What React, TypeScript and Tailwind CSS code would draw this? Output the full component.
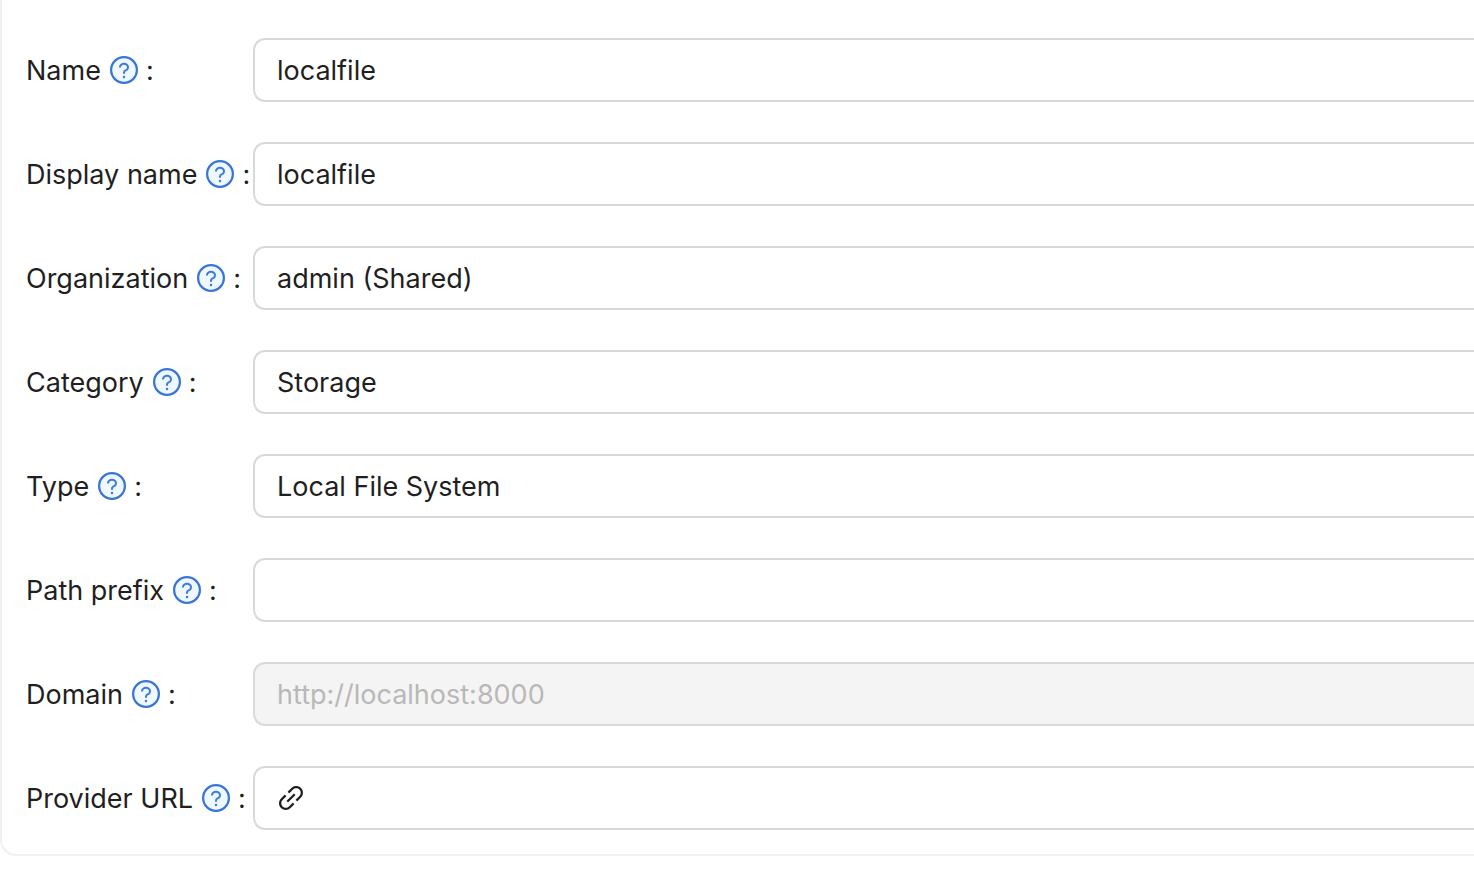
import type { ReactNode } from "react";
import { AiOutlineLink } from "react-icons/ai";

function QuestionIcon() {
  return (
    <svg viewBox="0 0 1024 1024" className="size-8 shrink-0" aria-hidden="true">
      <circle cx="512" cy="512" r="416" fill="#f0f8ff" />
      <circle cx="512" cy="512" r="412" fill="none" stroke="#3875d7" strokeWidth="72" />
      <path
        fill="#3f7bda"
        d="M472 732a40 40 0 1 0 80 0 40 40 0 1 0-80 0zm151.6-415.3C593.6 290.5 554 276 512 276s-81.6 14.4-111.6 40.7C369.2 344 352 380.7 352 420v7.6c0 4.4 3.6 8 8 8h48c4.4 0 8-3.6 8-8V420c0-44.1 43.1-80 96-80s96 35.9 96 80c0 31.1-22 59.6-56.1 72.7-21.2 8.1-39.2 22.3-52.1 40.9-13.1 19-19.9 41.8-19.9 64.9V620c0 4.4 3.6 8 8 8h48c4.4 0 8-3.6 8-8v-22.7c0-19.7 12.4-37.7 30.9-44.8 59-22.7 97.1-74.7 97.1-132.5.1-39.3-17.1-76-48.3-103.3z"
      />
    </svg>
  );
}

const control =
  "block h-16 w-full min-w-0 appearance-none rounded-l-xl border-2 border-r-0 border-[#d9d9d9] bg-white px-[22px] outline-none focus:border-[#3875d7] disabled:bg-[#f4f4f4] disabled:text-[#b8b8b8] disabled:opacity-100";

function Row({ id, label, children }: { id: string; label: string; children: ReactNode }) {
  return (
    <div className="grid grid-cols-[227px_minmax(0,1fr)] items-center">
      <label htmlFor={id} className="flex items-center whitespace-nowrap">
        <span className="mr-[7px] pt-0.5">{label}</span>
        <QuestionIcon />
        <span className="ml-1.5 pt-0.5">:</span>
      </label>
      {children}
    </div>
  );
}

function SelectRow({ id, label, value }: { id: string; label: string; value: string }) {
  return (
    <Row id={id} label={label}>
      <select id={id} defaultValue={value} className={`${control} pt-0.5`}>
        <option value={value}>{value}</option>
      </select>
    </Row>
  );
}

export default function App() {
  return (
    <main className="min-h-screen bg-white font-['Inter',sans-serif] text-[27px] leading-8 text-[#1f1f1f]">
      <form className="flex flex-col gap-10 rounded-bl-2xl border-b-2 border-l-2 border-[#f0f0f0] pt-[38px] pb-6 pl-6">
        <Row id="name" label="Name">
          <input id="name" defaultValue="localfile" className={control} />
        </Row>
        <Row id="display-name" label="Display name">
          <input id="display-name" defaultValue="localfile" className={control} />
        </Row>
        <SelectRow id="organization" label="Organization" value="admin (Shared)" />
        <SelectRow id="category" label="Category" value="Storage" />
        <SelectRow id="type" label="Type" value="Local File System" />
        <Row id="path-prefix" label="Path prefix">
          <input id="path-prefix" className={control} />
        </Row>
        <Row id="domain" label="Domain">
          <input id="domain" defaultValue="http://localhost:8000" disabled className={control} />
        </Row>
        <Row id="provider-url" label="Provider URL">
          <div className="flex h-16 items-center gap-2 rounded-l-xl border-2 border-r-0 border-[#d9d9d9] bg-white pl-5 focus-within:border-[#3875d7]">
            <AiOutlineLink className="size-8 shrink-0" aria-hidden="true" />
            <input id="provider-url" type="url" className="h-full min-w-0 flex-1 bg-transparent outline-none" />
          </div>
        </Row>
      </form>
    </main>
  );
}
